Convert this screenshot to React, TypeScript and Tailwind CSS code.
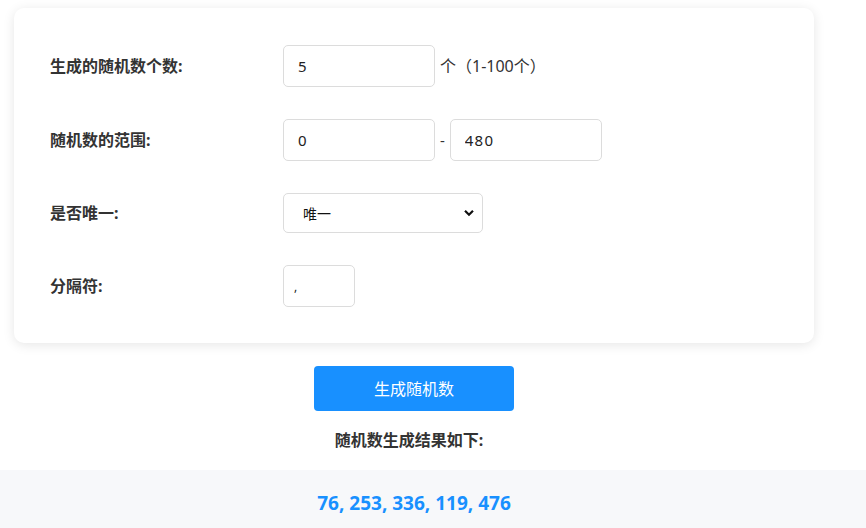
import React, { useState } from "react";

const inputCls =
  "h-[42px] rounded-[5px] border border-[#dcdcdc] bg-white px-[14px] text-[15px] tracking-[1.2px] text-[#222] outline-none";

export default function App() {
  const [count, setCount] = useState("5");
  const [min, setMin] = useState("0");
  const [max, setMax] = useState("480");
  const [unique, setUnique] = useState("1");
  const [sep, setSep] = useState(",");

  return (
    <div
      className="min-h-[528px] bg-white text-[#333]"
      style={{ fontFamily: '"Noto Sans", "Noto Sans CJK SC", sans-serif' }}
    >
      <div className="ml-[14px] w-[800px] pt-[8px]">
        {/* settings card */}
        <div className="flex flex-col gap-[32px] rounded-[10px] bg-white px-[36px] pt-[37px] pb-[36px] shadow-[0_2px_12px_rgba(0,0,0,0.1)]">
          <div className="flex items-center">
            <label className="w-[233px] text-[16px] font-bold">生成的随机数个数:</label>
            <input className={`${inputCls} w-[152px]`} value={count} onChange={(e) => setCount(e.target.value)} />
            <span className="ml-[5px] text-[16px]">个（1-100个）</span>
          </div>

          <div className="flex items-center">
            <label className="w-[233px] text-[16px] font-bold">随机数的范围:</label>
            <input className={`${inputCls} w-[152px]`} value={min} onChange={(e) => setMin(e.target.value)} />
            <span className="mx-[5px] text-[15px]">-</span>
            <input className={`${inputCls} w-[152px]`} value={max} onChange={(e) => setMax(e.target.value)} />
          </div>

          <div className="flex items-center">
            <label className="w-[233px] text-[16px] font-bold">是否唯一:</label>
            <div className="relative">
              <select
                className="h-[40px] w-[200px] appearance-none rounded-[5px] border border-[#dcdcdc] bg-white pl-[19px] text-[14px] text-[#111] outline-none"
                value={unique}
                onChange={(e) => setUnique(e.target.value)}
              >
                <option value="1">唯一</option>
                <option value="0">可重复</option>
              </select>
              <svg
                className="pointer-events-none absolute right-[9px] top-1/2 -translate-y-1/2"
                width="10"
                height="7"
                viewBox="0 0 10 7"
              >
                <path d="M1 1.2 L5 5.2 L9 1.2" fill="none" stroke="#111" strokeWidth="2.2" />
              </svg>
            </div>
          </div>

          <div className="flex items-center">
            <label className="w-[233px] text-[16px] font-bold">分隔符:</label>
            <input
              className="h-[42px] w-[72px] rounded-[5px] border border-[#dcdcdc] bg-white px-[10px] text-[12px] text-[#222] outline-none"
              value={sep}
              onChange={(e) => setSep(e.target.value)}
            />
          </div>
        </div>

        <div className="mt-[23px] flex flex-col items-center">
          <button className="h-[45px] w-[200px] rounded-[4px] bg-[#1890ff] text-[16px] text-white">
            生成随机数
          </button>
          <div className="mt-[17px] mr-[10px] text-[16px] font-bold leading-[24px]">随机数生成结果如下:</div>
        </div>
      </div>

      {/* result strip */}
      <div className="mt-[18px] flex h-[58px] items-start justify-center bg-[#f7f8fa] pt-[20px]">
        <div className="ml-[-38px] text-[19px] font-bold leading-[26px] text-[#1890ff]" style={{ fontFamily: '"Open Sans", sans-serif' }}>
          76, 253, 336, 119, 476
        </div>
      </div>
    </div>
  );
}
